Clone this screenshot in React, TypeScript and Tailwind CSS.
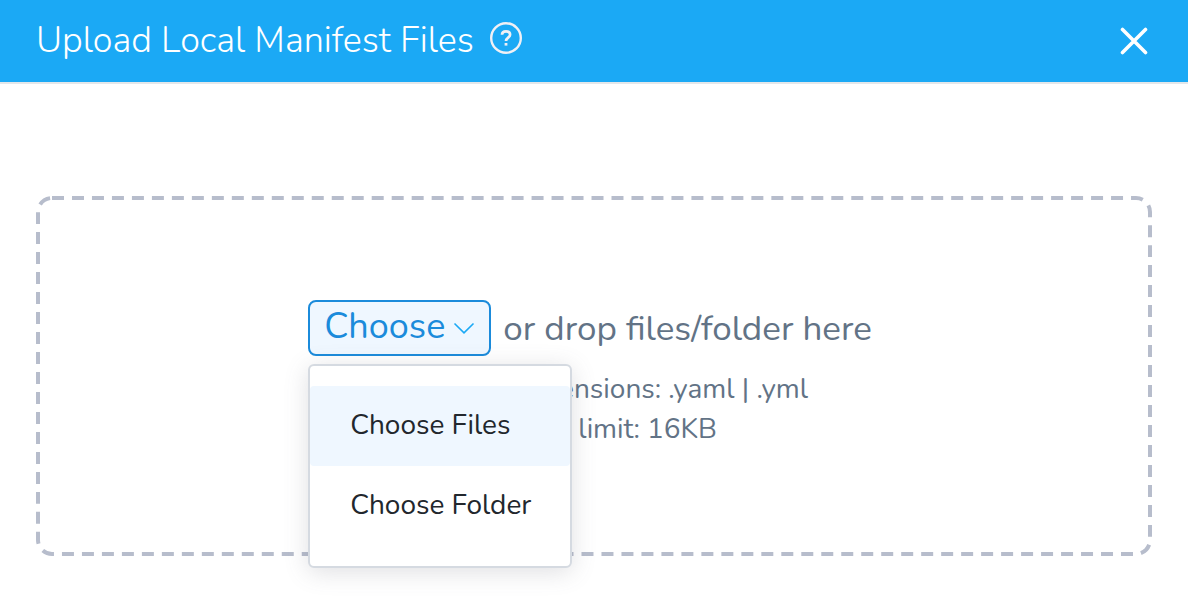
import { useState } from "react";

const menuItems = ["Choose Files", "Choose Folder"];

function HelpIcon() {
  return (
    <svg viewBox="0 0 32 32" className="size-8" fill="none" stroke="#f0f0f5" aria-hidden="true">
      <circle cx="16" cy="16" r="14.8" strokeWidth="2.4" />
      <path d="M12 12.8C12 10.600 13.700 9.400 16 9.400s4.100 1.300 4.100 3.400c0 2.700-4.100 3-4.100 6.200" strokeWidth="2.700" />
      <path d="M16 21v2.600" strokeWidth="2.800" />
    </svg>
  );
}

function DashedFrame() {
  return (
    <svg className="pointer-events-none absolute inset-0 h-full w-full p-0.5" overflow="visible" aria-hidden="true">
      <rect
        width="100%"
        height="100%"
        rx="14"
        fill="none"
        stroke="#b7bdcc"
        strokeWidth="4"
        pathLength={2914}
        strokeDasharray="12 8"
      />
    </svg>
  );
}

function ChooseMenu() {
  const [open, setOpen] = useState(true);
  return (
    <div className="relative">
      <button
        type="button"
        aria-haspopup="menu"
        aria-expanded={open}
        onClick={() => setOpen(!open)}
        className="flex h-14 items-center gap-2 rounded-lg border-2 border-[#1b8bdb] bg-[#eff7ff] px-3.5 pb-0.5 text-[36px] leading-[48px] text-[#1b8bdb]"
      >
        Choose
        <svg viewBox="0 0 22 14" className="mt-1 h-3.5 w-[22px]" fill="none" stroke="#1ba9f5" strokeWidth="1.600" aria-hidden="true">
          <path d="M1.500 1.500 11 10.800 20.500 1.500" />
        </svg>
      </button>
      {open && (
        <div
          role="menu"
          className="absolute top-full left-0 z-10 mt-2 w-[264px] rounded-md border-2 border-[#d5dae1] bg-white py-5 shadow-[0_4px_24px_rgba(96,97,112,0.2)]"
        >
          {menuItems.map((item) => (
            <button
              key={item}
              type="button"
              role="menuitem"
              className="block h-20 w-full rounded-sm px-10 pb-0.5 text-left text-[28px] leading-8 whitespace-nowrap text-[#22272d] first:bg-[#eff7ff] hover:bg-[#eff7ff]"
            >
              {item}
            </button>
          ))}
        </div>
      )}
    </div>
  );
}

export default function App() {
  return (
    <div className="min-h-screen bg-white font-[Nunito,Lato,sans-serif]">
      <header className="flex h-21 items-center justify-between border-b-2 border-[#e3e7ea] bg-[#1ba9f5] px-9">
        <div className="flex items-center gap-4">
          <h1 className="text-[36px] leading-[48px] font-light text-white">Upload Local Manifest Files</h1>
          <button type="button" aria-label="Help" className="pb-1.5">
            <HelpIcon />
          </button>
        </div>
        <button type="button" aria-label="Close" className="flex size-9 items-center justify-center">
          <svg viewBox="0 0 28 28" className="size-7" stroke="#fff" strokeWidth="3.600" strokeLinecap="round" aria-hidden="true">
            <path d="M2.500 2.500l23 23M25.500 2.500l-23 23" />
          </svg>
        </button>
      </header>
      <main className="px-9 pt-28 pb-14">
        <section className="relative flex flex-col items-center pt-26 pb-[107px]">
          <DashedFrame />
          <div className="flex items-center gap-3 pr-2">
            <ChooseMenu />
            <p className="pt-0.5 text-[35px] leading-[48px] text-[#627386]">or drop files/folder here</p>
          </div>
          <div className="pt-[13px] text-center text-[28px] leading-10 text-[#627386]">
            <p>Supported extensions: .yaml | .yml</p>
            <p>File size limit: 16KB</p>
          </div>
        </section>
      </main>
    </div>
  );
}
